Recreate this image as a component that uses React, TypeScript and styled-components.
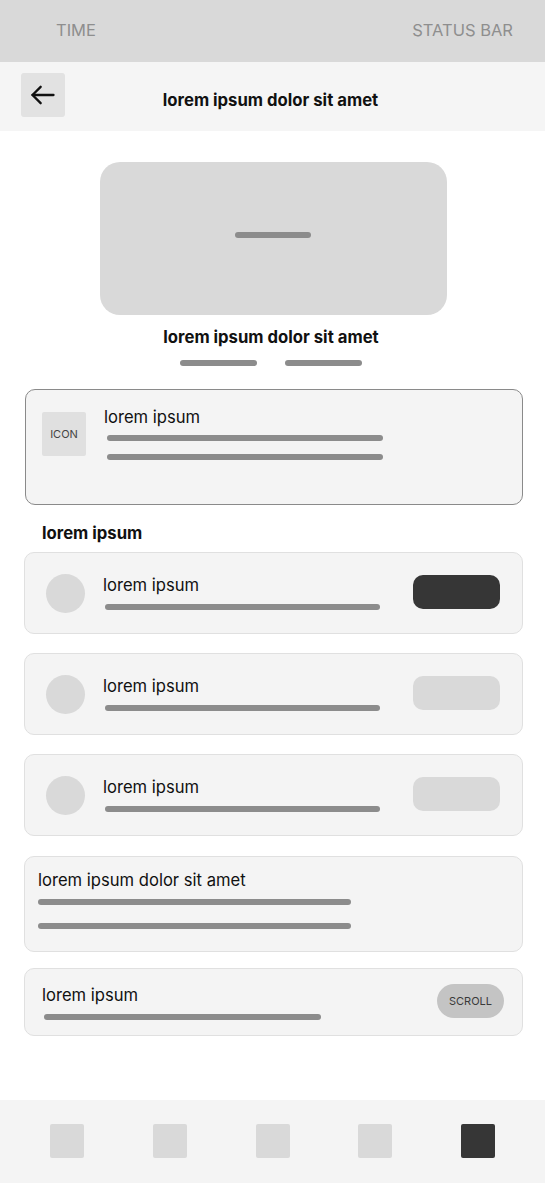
import React, { FC } from "react";
import styled, { createGlobalStyle } from "styled-components";

const GlobalStyle = createGlobalStyle`
  html, body {
    margin: 0;
    padding: 0;
    background: #ffffff;
  }
  body {
    font-family: Inter, "Noto Sans", "Liberation Sans", sans-serif;
    color: #111111;
  }
  * {
    box-sizing: border-box;
  }
`;

const Page = styled.div`
  width: 545px;
  min-height: 1183px;
  display: flex;
  flex-direction: column;
  background: #ffffff;
`;

const StatusBar = styled.div`
  height: 62px;
  background: #d9d9d9;
  display: flex;
  align-items: center;
  justify-content: space-between;
  padding: 0 32px 2px 56px;
  color: #8e8e8e;
  font-size: 16.5px;
`;

const Header = styled.header`
  height: 69px;
  background: #f5f5f5;
  display: flex;
  align-items: center;
  padding: 0 21px;
`;

const BackButton = styled.button`
  width: 44px;
  height: 44px;
  border: none;
  border-radius: 3px;
  background: #e2e2e2;
  display: flex;
  align-items: center;
  justify-content: center;
  padding: 0;
  margin-top: -4px;
`;

const HeaderTitle = styled.h1`
  flex: 1;
  margin: 0 48px 0 0;
  text-align: center;
  font-size: 16.7px;
  font-weight: 700;
  padding-top: 6px;
`;

const Main = styled.main`
  flex: 1;
  display: flex;
  flex-direction: column;
  padding: 31px 22px 40px 24px;
`;

const Hero = styled.div`
  width: 347px;
  height: 153px;
  margin: 0 0 0 76px;
  border-radius: 20px;
  background: #d9d9d9;
  display: flex;
  align-items: center;
  justify-content: center;
  padding: 0 2px 8px 0;
`;

const Bar = styled.div<{ $w: number }>`
  width: ${(p) => p.$w}px;
  height: 6px;
  border-radius: 3px;
  background: #8c8c8c;
`;

const Subtitle = styled.h2`
  margin: 12px 0 0 0;
  text-align: center;
  font-size: 16.7px;
  font-weight: 700;
  line-height: 20px;
  padding-right: 5px;
`;

const BarPair = styled.div`
  display: flex;
  justify-content: center;
  gap: 28px;
  margin-top: 13px;
  padding-right: 6px;
`;

const FeatureCard = styled.div`
  margin: 23px 0 0 1px;
  height: 116px;
  border: 1px solid #8a8a8a;
  border-radius: 10px;
  background: #f4f4f4;
  display: flex;
  align-items: flex-start;
  padding: 22px 16px 0 16px;
  gap: 18px;
`;

const IconBox = styled.div`
  width: 44px;
  height: 44px;
  flex: none;
  border-radius: 2px;
  background: #e0e0e0;
  display: flex;
  align-items: center;
  justify-content: center;
  font-size: 11px;
  color: #444444;
`;

const Texts = styled.div<{ $gap: number }>`
  display: flex;
  flex-direction: column;
  gap: ${(p) => p.$gap}px;
`;

const FeatureBody = styled(Texts)`
  margin-top: -5px;
`;

const Lines = styled(Texts)`
  padding-left: 3px;
`;

const Label = styled.div`
  font-size: 16.6px;
  line-height: 20px;
  color: #111111;
`;

const SectionLabel = styled.div`
  margin: 18px 0 9px 18px;
  font-size: 16.7px;
  font-weight: 700;
  line-height: 20px;
`;

const List = styled.div`
  display: flex;
  flex-direction: column;
  gap: 19px;
`;

const Card = styled.div<{ $h: number }>`
  height: ${(p) => p.$h}px;
  border: 1px solid #e0e0e0;
  border-radius: 10px;
  background: #f4f4f4;
  display: flex;
  align-items: center;
`;

const RowCard = styled(Card)`
  padding: 0 22px 0 21px;
`;

const Avatar = styled.div`
  width: 39px;
  height: 39px;
  border-radius: 50%;
  background: #d9d9d9;
  flex: none;
  margin-right: 16px;
`;

const RowBody = styled.div`
  flex: 1;
  display: flex;
  flex-direction: column;
  gap: 9px;
  padding-left: 2px;
  margin-top: -2px;
`;

const RowBar = styled(Bar)`
  margin-left: 2px;
`;

const Toggle = styled.div<{ $active: boolean }>`
  width: 87px;
  height: 34px;
  border-radius: 10px;
  background: ${(p) => (p.$active ? "#363636" : "#d9d9d9")};
  flex: none;
  margin-top: -3px;
`;

const TextCard = styled(Card)`
  align-items: flex-start;
  padding: 13px 13px 0 13px;
  margin-top: 1px;
`;

const ScrollCard = styled(Card)`
  justify-content: space-between;
  padding: 0 18px 0 17px;
  margin-top: -3px;
`;

const ScrollLines = styled(Texts)`
  & > div:last-child {
    margin-left: 2px;
  }
`;

const ScrollPill = styled.div`
  width: 67px;
  height: 34px;
  border-radius: 17px;
  background: #c4c4c4;
  display: flex;
  align-items: center;
  justify-content: center;
  font-size: 11px;
  color: #3a3a3a;
  margin-bottom: 2px;
`;

const BottomNav = styled.nav`
  height: 83px;
  background: #f4f4f4;
  display: flex;
  align-items: center;
  justify-content: space-between;
  padding: 0 50px 2px 50px;
`;

const NavItem = styled.div<{ $active?: boolean }>`
  width: 34px;
  height: 34px;
  border-radius: 2px;
  background: ${(p) => (p.$active ? "#363636" : "#d9d9d9")};
`;

const ArrowLeft: FC = () => (
  <svg width="28" height="28" viewBox="0 0 24 24" fill="none" stroke="#111" strokeWidth="2" strokeLinecap="round" strokeLinejoin="round">
    <path d="M21 12H3" />
    <path d="M10 5l-7 7 7 7" />
  </svg>
);

const rows = [true, false, false];

const App: FC = () => {
  return (
    <>
      <GlobalStyle />
      <Page>
        <StatusBar>
          <span>TIME</span>
          <span>STATUS BAR</span>
        </StatusBar>
        <Header>
          <BackButton aria-label="back">
            <ArrowLeft />
          </BackButton>
          <HeaderTitle>lorem ipsum dolor sit amet</HeaderTitle>
        </Header>
        <Main>
          <Hero>
            <Bar $w={76} />
          </Hero>
          <Subtitle>lorem ipsum dolor sit amet</Subtitle>
          <BarPair>
            <Bar $w={77} />
            <Bar $w={77} />
          </BarPair>

          <FeatureCard>
            <IconBox>ICON</IconBox>
            <FeatureBody $gap={8}>
              <Label>lorem ipsum</Label>
              <Lines $gap={13}>
                <Bar $w={276} />
                <Bar $w={276} />
              </Lines>
            </FeatureBody>
          </FeatureCard>

          <SectionLabel>lorem ipsum</SectionLabel>
          <List>
            {rows.map((active, i) => (
              <RowCard $h={82} key={i}>
                <Avatar />
                <RowBody>
                  <Label>lorem ipsum</Label>
                  <RowBar $w={275} />
                </RowBody>
                <Toggle $active={active} />
              </RowCard>
            ))}
            <TextCard $h={96}>
              <Texts $gap={9}>
                <Label>lorem ipsum dolor sit amet</Label>
                <Texts $gap={18}>
                  <Bar $w={313} />
                  <Bar $w={313} />
                </Texts>
              </Texts>
            </TextCard>
            <ScrollCard $h={68}>
              <ScrollLines $gap={9}>
                <Label>lorem ipsum</Label>
                <Bar $w={277} />
              </ScrollLines>
              <ScrollPill>SCROLL</ScrollPill>
            </ScrollCard>
          </List>
        </Main>
        <BottomNav>
          <NavItem />
          <NavItem />
          <NavItem />
          <NavItem />
          <NavItem $active />
        </BottomNav>
      </Page>
    </>
  );
};

export default App;
